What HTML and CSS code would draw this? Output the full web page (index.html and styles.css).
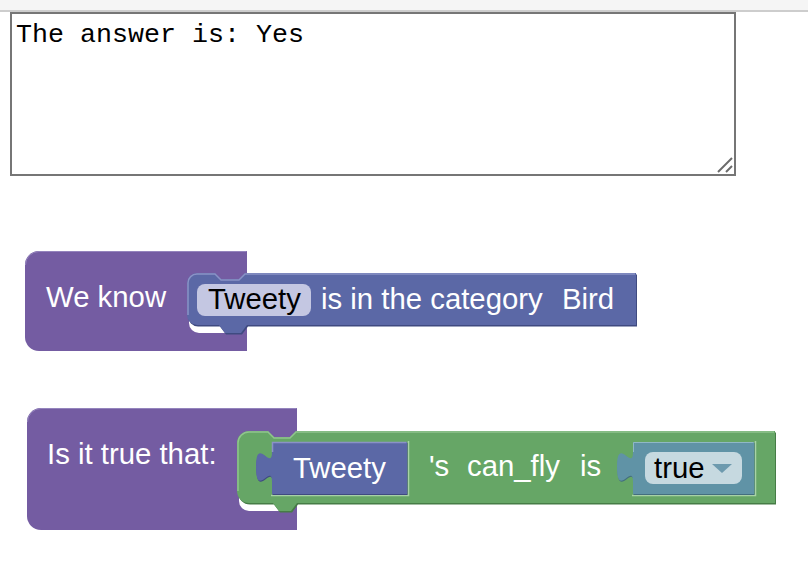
FILE: index.html
```html
<!DOCTYPE html>
<html>
<head>
<meta charset="utf-8">
<link rel="stylesheet" href="styles.css">
</head>
<body>
<div class="topbar"></div>
<div class="answer-wrap">
  <textarea class="answer">The answer is: Yes</textarea>
  <svg class="grip" width="16" height="16" viewBox="0 0 16 16">
    <line x1="1" y1="15" x2="15" y2="1" />
    <line x1="9" y1="15" x2="15" y2="9" />
  </svg>
</div>
<div class="workspace">
  <svg class="blocks" width="808" height="398" viewBox="0 176 808 398">
    <!-- Block 1 -->
    <path class="purple" d="M25,265 A14,14 0 0 1 39,251 H247 V351 H39 A14,14 0 0 1 25,337 Z"/>
    <path class="purple-hl" d="M25.5,265 A13.5,13.5 0 0 1 39,251.5 H246.5"/>
    <rect class="hole" x="189" y="279" width="58" height="54" rx="10"/>
    <path class="blue-dark" transform="translate(1,1.5)" d="M187,283 A10,10 0 0 1 197,273 H215 l6,6 h18 l6,-6 H636 V325 H247 l-6,8 h-16 l-6,-8 H197 A10,10 0 0 1 187,315 Z"/>
    <path class="blue" d="M187,283 A10,10 0 0 1 197,273 H215 l6,6 h18 l6,-6 H636 V325 H247 l-6,8 h-16 l-6,-8 H197 A10,10 0 0 1 187,315 Z"/>
    <path class="blue-hl" d="M188,315 V283 A9,9 0 0 1 197,274 H215 l6,6 h18 l6,-6 H635"/>
    <text class="bt" x="46" y="307">We know</text>
    <rect class="pill-blue" x="197" y="284" width="114" height="32" rx="8"/>
    <text class="bt dark" x="208" y="309">Tweety</text>
    <text class="bt" x="321" y="309">is in the category</text>
    <text class="bt" x="562" y="309">Bird</text>

    <!-- Block 2 -->
    <path class="purple" d="M27,422 A14,14 0 0 1 41,408 H297 V530 H41 A14,14 0 0 1 27,516 Z"/>
    <path class="purple-hl" d="M27.5,422 A13.5,13.5 0 0 1 41,408.5 H296.5"/>
    <text class="bt" x="47" y="464">Is it true that:</text>
    <rect class="hole" x="239" y="437" width="58" height="74" rx="10"/>
    <path class="green-dark" transform="translate(1,1.5)" d="M237,443 A12,12 0 0 1 249,431 H268 l6,6 h16 l6,-6 H775 V503 H297 l-6,8 h-12 l-6,-8 H249 A12,12 0 0 1 237,491 Z"/>
    <path class="green" d="M237,443 A12,12 0 0 1 249,431 H268 l6,6 h16 l6,-6 H775 V503 H297 l-6,8 h-12 l-6,-8 H249 A12,12 0 0 1 237,491 Z"/>
    <path class="green-hl" d="M238,491 V443 A11,11 0 0 1 249,432 H268 l6,6 h16 l6,-6 H774"/>
    <path class="green-hole-hl" d="M408.5,441 V495.5 H271"/>
    <path class="green-hole-hl" d="M755.5,441 V495.5 H632"/>

    <path class="blue-dark" transform="translate(0.5,1)" d="M272,442 H407 V494 H272 V482 c0,-20 -16,17 -16,-15 s16,5 16,-15 Z"/>
    <path class="blue" d="M272,442 H407 V494 H272 V482 c0,-20 -16,17 -16,-15 s16,5 16,-15 Z"/>
    <path class="blue-hl" d="M272.5,452 V442.5 H406.5"/>
    <text class="bt" x="293" y="478">Tweety</text>

    <text class="bt" x="429" y="476">'s</text>
    <text class="bt" x="467" y="476">can_fly</text>
    <text class="bt" x="580" y="476">is</text>

    <path class="teal-dark" transform="translate(0.5,1)" d="M633,442 H754 V494 H633 V482 c0,-20 -16,17 -16,-15 s16,5 16,-15 Z"/>
    <path class="teal" d="M633,442 H754 V494 H633 V482 c0,-20 -16,17 -16,-15 s16,5 16,-15 Z"/>
    <path class="teal-hl" d="M633.5,452 V442.5 H753.5"/>
    <rect class="pill-teal" x="645" y="452" width="97" height="32" rx="8"/>
    <text class="bt dark" x="654" y="478">true</text>
    <polygon class="arrow" points="712,464 732,464 722,473"/>
  </svg>
</div>
</body>
</html>
```
FILE: styles.css
```css
html, body {
  margin: 0;
  padding: 0;
  background: #ffffff;
}

.topbar {
  height: 10px;
  background: #f5f5f5;
  border-bottom: 2px solid #cdcdcd;
}

.answer-wrap {
  position: relative;
  width: 726px;
  margin-left: 10px;
}

.answer {
  display: block;
  box-sizing: border-box;
  width: 726px;
  height: 164px;
  margin: 0;
  padding: 4px;
  border: 2px solid #767676;
  border-radius: 0;
  font-family: "Liberation Mono", monospace;
  font-size: 26.67px;
  line-height: 1.3;
  color: #000;
  background: #fff;
  resize: none;
  outline: none;
}

.grip {
  position: absolute;
  right: 3px;
  bottom: 3px;
}

.grip line {
  stroke: #6b6b6b;
  stroke-width: 2;
}

.workspace {
  display: block;
}

.blocks {
  display: block;
}

.bt {
  font-family: "Liberation Sans", Arial, sans-serif;
  font-size: 29.33px;
  fill: #ffffff;
}

.bt.dark {
  fill: #000000;
}

.purple { fill: #745ca2; }
.purple-hl { fill: none; stroke: #9484bd; stroke-width: 1; }
.hole { fill: #ffffff; }

.blue { fill: #5b68a6; }
.blue-dark { fill: #3f4a80; }
.blue-hl { fill: none; stroke: #8a92c6; stroke-width: 1.5; }
.pill-blue { fill: #c4c7e2; }

.green { fill: #66a666; }
.green-dark { fill: #467c46; }
.green-hl { fill: none; stroke: #90c48e; stroke-width: 1.5; }
.green-hole-hl { fill: none; stroke: #a8d2a6; stroke-width: 1.5; }

.teal { fill: #6093a6; }
.teal-dark { fill: #436e7e; }
.teal-hl { fill: none; stroke: #90b8c6; stroke-width: 1; }
.pill-teal { fill: #c6d9e0; }
.arrow { fill: #6d9aae; }
```
